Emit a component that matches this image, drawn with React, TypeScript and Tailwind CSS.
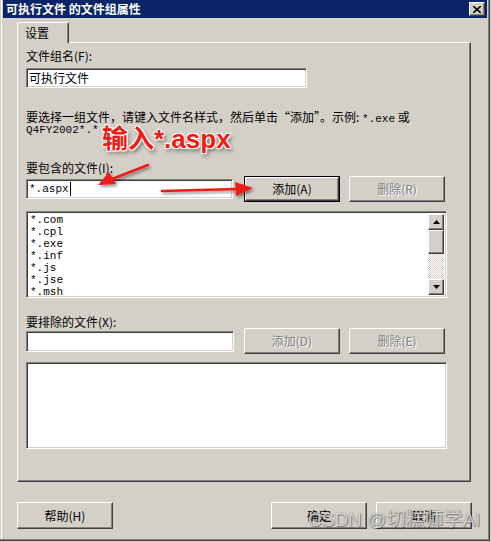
import React from 'react';

const raised =
  'border border-t-white border-l-white border-r-[#404040] border-b-[#404040] shadow-[inset_-1px_-1px_0_#808080] bg-[#d4d0c8]';
const sunken =
  'border border-t-[#808080] border-l-[#808080] border-r-white border-b-white shadow-[inset_1px_1px_0_#404040,inset_-1px_-1px_0_#d4d0c8] bg-white';

const Button = ({ label, disabled, isDefault, className }: { label: string; disabled?: boolean; isDefault?: boolean; className?: string }) => {
  const inner = (
    <div className={`${raised} w-full h-full flex items-center justify-center`}>
      <span className={disabled ? 'text-[#808080] [text-shadow:1px_1px_0_#fff]' : 'text-black'}>{label}</span>
    </div>
  );
  if (isDefault) {
    return <div className={`border border-black ${className}`}>{inner}</div>;
  }
  return <div className={className}>{inner}</div>;
};

const Arrow = ({ dir }: { dir: 'up' | 'down' }) => (
  <svg width="7" height="4" viewBox="0 0 7 4">
    {dir === 'up' ? <polygon points="3.5,0 7,4 0,4" fill="#000" /> : <polygon points="0,0 7,0 3.5,4" fill="#000" />}
  </svg>
);

const files = ['*.com', '*.cpl', '*.exe', '*.inf', '*.js', '*.jse', '*.msh'];

const App = () => {
  return (
    <div className="w-[491px] h-[542px] bg-[#d4d0c8] text-[12px] text-black font-['Noto_Sans_CJK_SC',sans-serif]">
      <div className="relative w-[490px] h-[541px] px-[3px] shadow-[inset_-1px_-1px_0_#404040,inset_-2px_-2px_0_#808080,inset_1px_0_0_#d4d0c8,inset_2px_0_0_#fff]">
        {/* title bar */}
        <div className="h-[18px] bg-[#0a246a] flex items-center justify-between pl-[3px] pr-[2px]">
          <span className="text-white font-bold text-[12px] leading-none">可执行文件 的文件组属性</span>
          <div className={`${raised} w-[16px] h-[14px] flex items-center justify-center`}>
            <svg width="8" height="7" viewBox="0 0 8 7">
              <path d="M0 0 L8 7 M8 0 L0 7" stroke="#000" strokeWidth="1.6" />
            </svg>
          </div>
        </div>

        {/* tab header */}
        <div className="relative z-10 mt-[4px] ml-[14px] w-[52px] h-[21px] -mb-px bg-[#d4d0c8] border-t border-l border-white border-r border-r-[#404040] shadow-[inset_-1px_0_0_#808080] rounded-t-[2px] pl-[7px] pt-[3px] leading-[14px]">
          设置
        </div>

        {/* tab panel */}
        <div className="ml-[14px] w-[454px] h-[440px] border-t border-l border-white border-r border-b border-r-[#404040] border-b-[#404040] shadow-[inset_-1px_-1px_0_#808080] pl-[8px]">
          <div className="mt-[6px] h-[14px] leading-[14px]">文件组名(F):</div>
          <div className={`${sunken} mt-[5px] w-[281px] h-[20px] pl-[2px] flex items-center`}>可执行文件</div>

          <div className="mt-[22px] h-[28px] leading-[14px]">
            <div className="h-[14px]">
              要选择一组文件，请键入文件名样式，然后单击“添加”。示例: <span className="font-['Liberation_Mono',monospace] text-[11px] leading-none">*.exe</span> 或
            </div>
            <div className="h-[14px] font-['Liberation_Mono',monospace] text-[11px] leading-[12px]">Q4FY2002*.*</div>
          </div>

          <div className="mt-[23px] h-[14px] leading-[14px]">要包含的文件(I):</div>
          <div className="mt-[1px] h-[26px] flex items-center">
            <div className={`${sunken} w-[207px] h-[20px] pl-[2px] flex items-center font-['Liberation_Mono',monospace] text-[11px]`}>
              *.aspx<span className="ml-[1px] w-px h-[14px] bg-black" />
            </div>
            <Button label="添加(A)" isDefault className="ml-[11px] w-[96px] h-[26px]" />
            <Button label="删除(R)" disabled className="ml-[9px] w-[96px] h-[26px]" />
          </div>

          <div className={`${sunken} mt-[9px] w-[421px] h-[87px] p-[2px] flex`}>
            <div className="flex-1 pl-[1px] font-['Liberation_Mono',monospace] text-[11px] leading-[12px]">
              {files.map((f) => (
                <div key={f}>{f}</div>
              ))}
            </div>
            <div className="w-[16px] flex flex-col">
              <div className={`${raised} h-[16px] flex items-center justify-center`}>
                <Arrow dir="up" />
              </div>
              <div className={`${raised} h-[24px]`} />
              <div className="flex-1 bg-[repeating-conic-gradient(#ffffff_0_25%,#d4d0c8_0_50%)] bg-size-[2px_2px]" />
              <div className={`${raised} h-[16px] flex items-center justify-center`}>
                <Arrow dir="down" />
              </div>
            </div>
          </div>

          <div className="mt-[18px] h-[12px] leading-[12px]">要排除的文件(X):</div>
          <div className="h-[26px] flex items-center">
            <div className={`${sunken} w-[208px] h-[21px]`} />
            <Button label="添加(D)" disabled className="ml-[10px] w-[96px] h-[26px]" />
            <Button label="删除(E)" disabled className="ml-[9px] w-[96px] h-[26px]" />
          </div>

          <div className={`${sunken} mt-[8px] w-[421px] h-[87px]`} />
        </div>

        {/* bottom buttons */}
        <div className="mt-[20px] ml-[14px] mr-[15px] flex">
          <Button label="帮助(H)" className="w-[96px] h-[27px]" />
          <Button label="确定" className="ml-auto w-[96px] h-[27px]" />
          <Button label="取消" className="ml-[9px] w-[96px] h-[27px]" />
        </div>

        {/* annotation */}
        <div className="absolute left-[102px] top-[124px] text-[26px] leading-[30px] font-bold text-[#f01c14] font-['Liberation_Sans','Noto_Sans_CJK_SC',sans-serif] [text-shadow:-1px_-1px_0_#fff,1px_-1px_0_#fff,-1px_1px_0_#fff,1px_1px_0_#fff,2px_3px_4px_rgba(0,0,0,0.55)]">
          输入*.aspx
        </div>
        <svg className="absolute left-0 top-0 pointer-events-none" width="491" height="542" viewBox="0 0 491 542">
          <defs>
            <filter id="sh" x="-20%" y="-50%" width="140%" height="200%">
              <feDropShadow dx="1.5" dy="2" stdDeviation="1.5" floodColor="#000" floodOpacity="0.45" />
            </filter>
          </defs>
          <g filter="url(#sh)" fill="#f21d14" stroke="#f21d14">
            <line x1="148" y1="165" x2="112" y2="179" strokeWidth="2.5" strokeLinecap="round" />
            <polygon points="98,185 109,172 116,184" stroke="none" />
            <line x1="162" y1="191" x2="238" y2="189" strokeWidth="2.5" strokeLinecap="round" />
            <polygon points="253,188 235,182 236,196" stroke="none" />
          </g>
        </svg>

        {/* watermark */}
        <div className="absolute left-[308px] top-[509px] text-[19px] leading-[22px] text-[rgba(255,255,255,0.75)] font-['Liberation_Sans','Noto_Sans_CJK_SC',sans-serif] [text-shadow:0_0_1px_rgba(0,0,0,0.6),1px_1px_1px_rgba(0,0,0,0.35)] whitespace-nowrap">
          CSDN @切糕师学AI
        </div>
      </div>
    </div>
  );
};

export default App;
